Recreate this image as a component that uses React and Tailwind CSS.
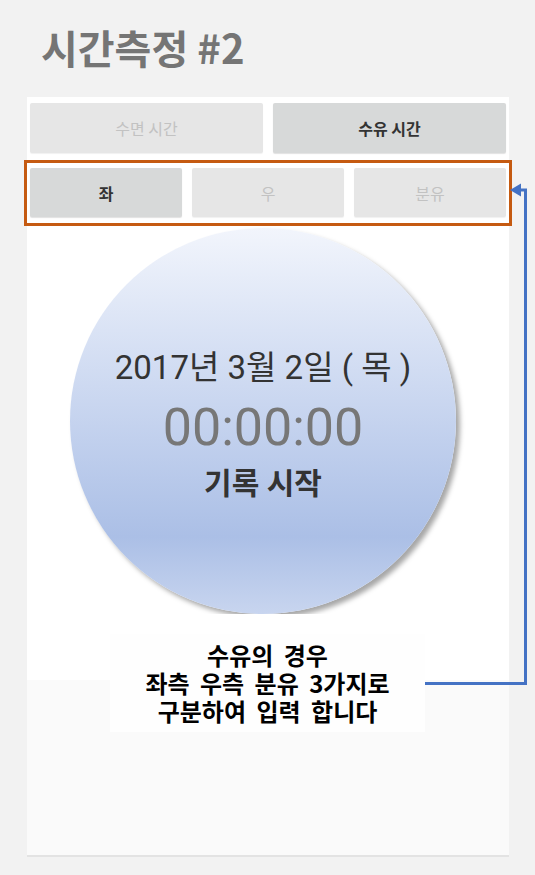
import React from 'react';

const kr = { fontFamily: '"Noto Sans CJK KR", sans-serif' };
const clock = { fontFamily: 'Roboto, "Noto Sans CJK KR", sans-serif' };

const TabButton = ({ label, active }) => (
    <div
        className={
            active
                ? "flex items-center justify-center rounded-[2px] bg-[#d7d9d9] text-[16px] font-bold text-[#333333] shadow-[0_1px_1px_rgba(0,0,0,0.12)]"
                : "flex items-center justify-center rounded-[2px] bg-[#e6e6e6] text-[16px] text-[#c2c2c2] shadow-[0_1px_1px_rgba(0,0,0,0.06)]"
        }
    >
        {label}
    </div>
);

export default function App() {
    return (
        <div className="relative w-[535px] h-[875px] overflow-hidden bg-[#f2f2f2]" style={kr}>
            <h1 className="pl-[41px] pt-[21px] h-[97px] text-[40px] leading-[52px] font-bold text-[#757575]">
                시간측정 #2
            </h1>

            <div className="ml-[27px] w-[482px] h-[760px] flex flex-col bg-white border-b-2 border-[#e3e3e3]">
                {/* mode tabs */}
                <div className="grid grid-cols-2 gap-[10px] h-[50px] mt-[6px] px-[3px]">
                    <TabButton label="수면 시간" />
                    <TabButton label="수유 시간" active />
                </div>

                {/* side tabs, highlighted */}
                <div className="-mx-[3px] mt-[7px] h-[66px] border-[3px] border-[#c55a11] px-[3px] pt-[5px]">
                    <div className="grid grid-cols-3 gap-[10px] h-[49px]">
                        <TabButton label="좌" active />
                        <TabButton label="우" />
                        <TabButton label="분유" />
                    </div>
                </div>

                {/* record button */}
                <div className="ml-[43px] mt-[2px] w-[386px] h-[386px] rounded-full bg-gradient-to-b from-[#f2f5fc] via-[#abbfe6] via-80% to-[#c8d5ef] shadow-[4px_4px_5px_rgba(0,0,0,0.35)] flex flex-col items-center pt-[120px]" style={clock}>
                    <div className="text-[33px] leading-[40px] text-[#333333]">2017년 3월 2일 ( 목 )</div>
                    <div className="mt-[12px] text-[52px] leading-[56px] text-[#777777]">00:00:00</div>
                    <div className="mt-[8px] text-[30px] leading-[40px] font-bold text-[#333333]">기록 시작</div>
                </div>

                <div className="h-[66px] bg-white" />
                <div className="flex-1 bg-[#fafafa]" />
            </div>

            {/* annotation */}
            <div className="absolute left-[110px] top-[634px] w-[315px] h-[98px] bg-[#fefefe] flex flex-col items-center pt-[7px] text-[24px] leading-[28px] font-bold text-black [word-spacing:5px]">
                <div className="h-[28px]">수유의 경우</div>
                <div className="h-[28px]">좌측 우측 분유 3가지로</div>
                <div className="h-[28px]">구분하여 입력 합니다</div>
            </div>

            <svg className="absolute left-0 top-0" width="535" height="875" viewBox="0 0 535 875">
                <polyline points="425,683.5 525.5,683.5 525.5,190 519,190" fill="none" stroke="#4472c4" strokeWidth="3" />
                <polygon points="510,190 521,183.5 521,196.5" fill="#4472c4" />
            </svg>
        </div>
    );
}
